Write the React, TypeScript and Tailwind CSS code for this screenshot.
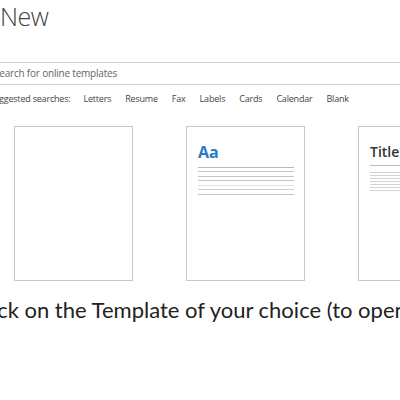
const SUGGESTED = ["Letters", "Resume", "Fax", "Labels", "Cards", "Calendar", "Blank"];

function BlankCard() {
  return <div className="w-[119px] h-[155px] shrink-0 border border-[#c6c6c6] bg-white" />;
}

function BlogCard() {
  const lines = ["#b8b8b8", "#c4c4c4", "#c4c4c4", "#c4c4c4", "#e2e2e2", "#cfcfcf", "#c4c4c4"];
  return (
    <div className="w-[119px] h-[155px] shrink-0 border border-[#c6c6c6] bg-white px-[11px] pt-[15px]">
      <div className="text-[16px] leading-[20px] font-bold text-[#2b7bc4]">Aa</div>
      <div className="mt-[5px] flex flex-col gap-[3.5px]">
        {lines.map((c, i) => (
          <div key={i} className="h-px w-[96px]" style={{ backgroundColor: c }} />
        ))}
      </div>
    </div>
  );
}

function TitleCard() {
  return (
    <div className="w-[119px] h-[155px] shrink-0 border border-[#c6c6c6] bg-white px-[11px] pt-[15px]">
      <div className="text-[14px] leading-[20px] font-semibold text-[#333]">Title</div>
      <div className="mt-[3px] h-px w-[96px] bg-[#bcbcbc]" />
      <div className="mt-[6px] flex flex-col gap-[2px]">
        {[0, 1, 2, 3, 4, 5, 6].map((i) => (
          <div key={i} className="h-px w-[96px] bg-[#d4d4d4]" />
        ))}
      </div>
    </div>
  );
}

export default function App() {
  return (
    <div className="w-[400px] h-[400px] overflow-hidden bg-white font-['Open_Sans',sans-serif]">
      {/* Header */}
      <div className="text-[25px] leading-[32px] font-light tracking-[-0.5px] text-[#444]">New</div>

      {/* Search box */}
      <div className="mt-[30px] h-[23px] border-y border-[#d2d2d2] flex items-center overflow-hidden whitespace-nowrap">
        <span className="ml-[-6px] text-[10px] tracking-[-0.2px] text-[#666]">Search for online templates</span>
      </div>

      {/* Suggested */}
      <div className="mt-[7px] flex items-center gap-[14px] overflow-hidden whitespace-nowrap text-[9px] tracking-[-0.2px] text-[#444]">
        <span className="ml-[-11px] mr-[-1px]">Suggested searches:</span>
        {SUGGESTED.map((s) => (
          <span key={s}>{s}</span>
        ))}
      </div>

      {/* Templates */}
      <div className="mt-[20px] ml-[14px] flex gap-[53px]">
        <BlankCard />
        <BlogCard />
        <TitleCard />
      </div>

      {/* Caption */}
      <div className="mt-[12px] overflow-hidden whitespace-nowrap font-['Lato',sans-serif] text-[22px] text-[#222]">
        <span className="ml-[-28px]">Click on the Template of your choice (to open it)</span>
      </div>
    </div>
  );
}
